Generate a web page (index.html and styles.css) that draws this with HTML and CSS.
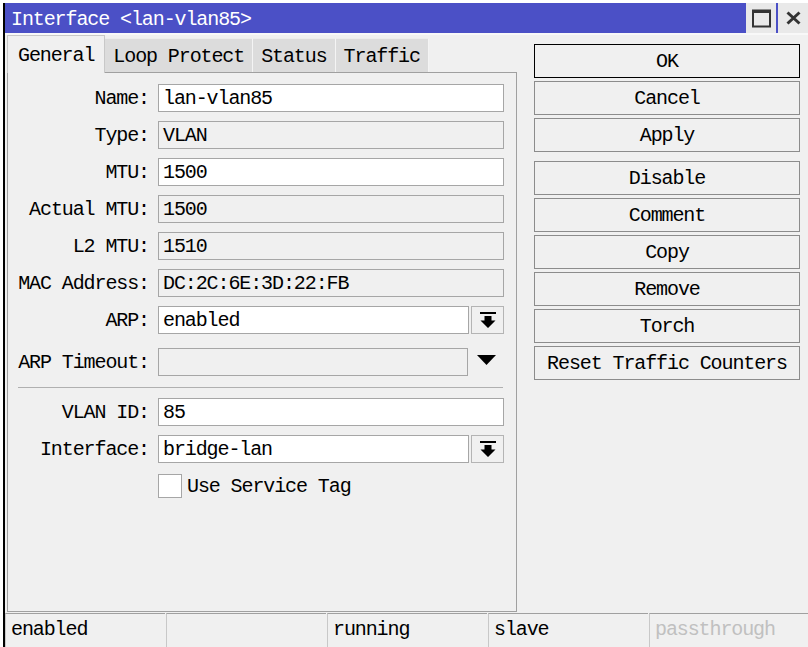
FILE: index.html
```html
<!DOCTYPE html>
<html>
<head>
<meta charset="utf-8">
<title>Interface &lt;lan-vlan85&gt;</title>
<link rel="stylesheet" href="styles.css">
</head>
<body>
<div class="window">
  <div class="titlebar">
    <span class="title">Interface &lt;lan-vlan85&gt;</span>
    <div class="wctl">
      <div class="wbtn">
        <svg width="19" height="19" viewBox="0 0 19 19"><rect x="1" y="1.5" width="17" height="16" fill="none" stroke="#333" stroke-width="2"/><rect x="1" y="1" width="17" height="3" fill="#333"/></svg>
      </div>
      <div class="wbtn">
        <svg width="15" height="14" viewBox="0 0 15 14"><path d="M1.5 1.5L13.5 12.5M13.5 1.5L1.5 12.5" stroke="#333" stroke-width="3"/></svg>
      </div>
    </div>
  </div>
  <div class="main">
    <div class="left">
      <div class="tabs">
        <div class="tab active">General</div>
        <div class="tab">Loop Protect</div>
        <div class="tab">Status</div>
        <div class="tab">Traffic</div>
      </div>
      <div class="panel">
        <div class="row"><label class="lbl">Name:</label><div class="field edit">lan-vlan85</div></div>
        <div class="row"><label class="lbl">Type:</label><div class="field ro">VLAN</div></div>
        <div class="row"><label class="lbl">MTU:</label><div class="field edit">1500</div></div>
        <div class="row"><label class="lbl">Actual MTU:</label><div class="field ro">1500</div></div>
        <div class="row"><label class="lbl">L2 MTU:</label><div class="field ro">1510</div></div>
        <div class="row"><label class="lbl">MAC Address:</label><div class="field ro">DC:2C:6E:3D:22:FB</div></div>
        <div class="row"><label class="lbl">ARP:</label><div class="field edit">enabled</div>
          <div class="ddbtn"><svg width="16" height="16" viewBox="0 0 16 16"><rect x="0" y="0" width="16" height="2" fill="#000"/><path d="M4.5 4h7v4.5h4L8 16 0.5 8.5h4z" fill="#000"/></svg></div>
        </div>
        <div class="row gap-top"><label class="lbl">ARP Timeout:</label><div class="field ro">&nbsp;</div>
          <div class="ddarrow"><svg width="19" height="10" viewBox="0 0 19 10"><path d="M0 0h19L9.5 10z" fill="#000"/></svg></div>
        </div>
        <div class="sep"></div>
        <div class="row"><label class="lbl">VLAN ID:</label><div class="field edit">85</div></div>
        <div class="row"><label class="lbl">Interface:</label><div class="field edit">bridge-lan</div>
          <div class="ddbtn"><svg width="16" height="16" viewBox="0 0 16 16"><rect x="0" y="0" width="16" height="2" fill="#000"/><path d="M4.5 4h7v4.5h4L8 16 0.5 8.5h4z" fill="#000"/></svg></div>
        </div>
        <div class="row"><span class="lbl"></span><span class="check"></span><span class="check-text">Use Service Tag</span></div>
      </div>
    </div>
    <div class="actions">
      <div class="btn default">OK</div>
      <div class="btn">Cancel</div>
      <div class="btn group-end">Apply</div>
      <div class="btn">Disable</div>
      <div class="btn">Comment</div>
      <div class="btn">Copy</div>
      <div class="btn">Remove</div>
      <div class="btn">Torch</div>
      <div class="btn">Reset Traffic Counters</div>
    </div>
  </div>
  <div class="status">
    <div class="cell">enabled</div>
    <div class="cell"></div>
    <div class="cell">running</div>
    <div class="cell">slave</div>
    <div class="cell dim">passthrough</div>
  </div>
</div>
</body>
</html>
```
FILE: styles.css
```css
* { box-sizing: border-box; }
html, body { margin: 0; padding: 0; }
body {
  background: #ffffff;
  width: 808px;
  height: 647px;
  overflow: hidden;
  font-family: "Liberation Mono", "DejaVu Sans Mono", monospace;
  font-size: 20px;
  letter-spacing: -1.1px;
  color: #000;
}
.window {
  margin: 3px 0 0 3px;
  width: 805px;
  height: 644px;
  border-left: 2px solid #000;
  background: #f0f0f0;
  display: flex;
  flex-direction: column;
  overflow: hidden;
}
.titlebar {
  height: 32px;
  flex: none;
  background: #4b50c6;
  display: flex;
  align-items: stretch;
  justify-content: space-between;
  border-bottom: 2px solid #f8f8f8;
}
.title {
  color: #fff;
  padding: 2px 0 0 6px;
  line-height: 30px;
}
.wctl { display: flex; gap: 2px; }
.wbtn {
  width: 30px;
  background: #e9e9e9;
  display: flex;
  align-items: center;
  justify-content: center;
}
.main {
  flex: none;
  height: 578px;
  display: flex;
}
.left {
  margin-left: 2px;
  width: 510px;
  display: flex;
  flex-direction: column;
}
.tabs {
  height: 37px;
  display: flex;
  align-items: flex-end;
}
.tab {
  height: 34px;
  padding: 3px 8px 0;
  background: #dcdcdc;
  border-top: 1px solid #ececec;
  border-right: 1px solid #f4f4f4;
  line-height: 30px;
}
.tab.active {
  position: relative;
  height: 38px;
  margin-bottom: -1px;
  padding: 5px 10px 0;
  background: #f0f0f0;
  border: 1px solid #c8c8c8;
  border-bottom: none;
  line-height: 30px;
}
.panel {
  height: 540px;
  border: 1px solid #a0a0a0;
  padding: 11px 12px 0 0;
}
.row {
  display: flex;
  align-items: center;
  height: 28px;
  margin-bottom: 9px;
}
.row.gap-top { margin-top: 14px; margin-bottom: 0; }
.lbl {
  width: 141px;
  margin-right: 9px;
  text-align: right;
  flex: none;
  white-space: nowrap;
}
.field {
  flex: 1;
  height: 28px;
  border: 1px solid #a6a6a6;
  padding-left: 4px;
  line-height: 27px;
  white-space: nowrap;
}
.field.edit { background: #fff; }
.field.ro { background: #f0f0f0; }
.ddbtn {
  width: 33px;
  height: 28px;
  margin-left: 2px;
  border: 1px solid #b4b4b4;
  background: #f0f0f0;
  display: flex;
  align-items: center;
  justify-content: center;
  flex: none;
}
.ddarrow {
  width: 36px;
  height: 28px;
  display: flex;
  align-items: center;
  justify-content: center;
  padding-bottom: 4px;
  flex: none;
}
.sep {
  height: 1px;
  background: #b0b0b0;
  margin: 11px 1px 10px 10px;
}
.check {
  width: 24px;
  height: 24px;
  background: #fff;
  border: 1px solid #a6a6a6;
  flex: none;
}
.check-text { margin-left: 5px; }
.actions {
  margin-left: 17px;
  width: 266px;
  padding-top: 9px;
  display: flex;
  flex-direction: column;
}
.btn {
  height: 34px;
  margin-bottom: 3px;
  border: 1px solid #8c8c8c;
  background: #f0f0f0;
  text-align: center;
  line-height: 33px;
  white-space: nowrap;
}
.btn.default { border-color: #000; }
.btn.group-end { margin-bottom: 9px; }
.status {
  flex: none;
  height: 34px;
  display: flex;
  gap: 1px;
}
.cell {
  width: 160px;
  flex: none;
  border-top: 1px solid #a0a0a0;
  border-left: 1px solid #c8c8c8;
  padding-left: 5px;
  line-height: 32px;
  white-space: nowrap;
}
.cell.dim { color: #c0c0c0; }
```
